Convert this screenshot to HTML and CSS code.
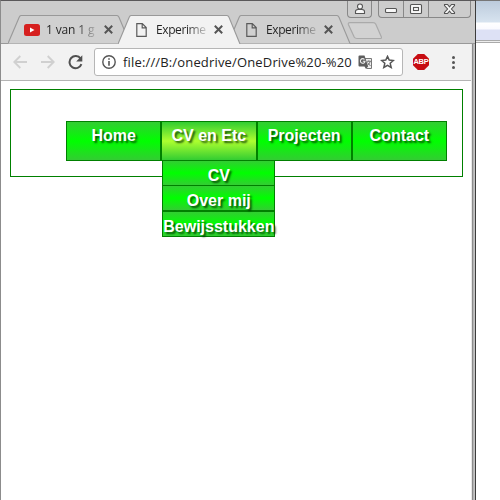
FILE: index.html
```html
<!DOCTYPE html>
<html lang="nl">
<head>
<meta charset="utf-8">
<title>Experiment</title>
<link rel="stylesheet" href="styles.css">
</head>
<body>
<div class="desktop">
  <div class="window">
    <header class="titlebar">
      <div class="controls">
        <span class="ctl user"><svg width="12" height="12" viewBox="0 0 12 12"><circle cx="6" cy="3.5" r="2.5"/><path d="M1.5 10.5V8.5Q1.5 6.7 4 6.5H8Q10.5 6.7 10.5 8.5V10.5Z"/></svg></span>
        <div class="ctl-group">
          <span class="ctl min"><svg width="14" height="12" viewBox="0 0 14 12"><rect x="1.5" y="5.5" width="11" height="4" rx="1"/></svg></span>
          <span class="ctl max"><svg width="14" height="12" viewBox="0 0 14 12"><rect x="1.5" y="1.5" width="11" height="9" rx="1"/><rect x="4.5" y="4.5" width="5" height="3"/></svg></span>
          <span class="ctl close"><svg width="13" height="12" viewBox="0 0 13 12"><path d="M1.5 1.5H4.5L6.5 3.8 8.5 1.5H11.5V2.5L8.4 6 11.5 9.5V10.5H8.5L6.5 8.2 4.5 10.5H1.5V9.5L4.6 6 1.5 2.5Z"/></svg></span>
        </div>
      </div>
      <div class="tabs">
        <div class="tab first">
          <svg class="shape" width="124" height="29" viewBox="0 0 124 29"><path d="M0 28.5L11.2 2.2Q12 .5 13.5 .5H108.5Q110 .5 111 2.2L122 28.5"/></svg>
          <svg class="youtube" width="16" height="12" viewBox="0 0 16 12"><rect width="16" height="12" rx="2.5" fill="#d6201f"/><path d="M6 3.5V8.5L10.5 6Z" fill="#fff"/></svg>
          <span class="label">1 van 1 g</span>
          <svg class="x" width="9" height="9" viewBox="0 0 9 9"><path d="M.8 .8L8.2 8.2M8.2 .8L.8 8.2"/></svg>
        </div>
        <div class="tab third">
          <svg class="shape" width="124" height="29" viewBox="0 0 124 29"><path d="M0 28.5L11.2 2.2Q12 .5 13.5 .5H108.5Q110 .5 111 2.2L122 28.5"/></svg>
          <svg class="page" width="11" height="14" viewBox="0 0 11 14"><path d="M.8 .7H6.3L10.2 4.6V13.3H.8ZM6.2 .7V4.8H10.2"/></svg>
          <span class="label">Experime</span>
          <svg class="x" width="9" height="9" viewBox="0 0 9 9"><path d="M.8 .8L8.2 8.2M8.2 .8L.8 8.2"/></svg>
        </div>
        <div class="tab active">
          <svg class="shape" width="124" height="29" viewBox="0 0 124 29"><path d="M0 29L11.2 2.2Q12 .5 13.5 .5H108.5Q110 .5 111 2.2L122 29"/></svg>
          <svg class="page" width="11" height="14" viewBox="0 0 11 14"><path d="M.8 .7H6.3L10.2 4.6V13.3H.8ZM6.2 .7V4.8H10.2"/></svg>
          <span class="label">Experime</span>
          <svg class="x" width="9" height="9" viewBox="0 0 9 9"><path d="M.8 .8L8.2 8.2M8.2 .8L.8 8.2"/></svg>
        </div>
        <svg class="newtab" width="36" height="18" viewBox="0 0 36 18"><path d="M3 .7H26Q28 .7 28.8 2.3L34.3 14.8Q35 16.5 33 16.5H10Q8 16.5 7.2 15L1.4 2.5Q.8 .7 3 .7Z"/></svg>
      </div>
    </header>
    <div class="toolbar">
      <svg class="arrow back" width="14" height="14" viewBox="0 0 14 14"><path d="M14 7H1.5M7.3 1L1.3 7 7.3 13"/></svg>
      <svg class="arrow fwd" width="14" height="14" viewBox="0 0 14 14"><path d="M0 7H12.5M6.7 1L12.7 7 6.7 13"/></svg>
      <svg class="reload" width="15" height="15" viewBox="0 0 15 15"><path d="M12.6 3.6A6.1 6.1 0 1 0 13.4 9.2" fill="none" stroke="#505050" stroke-width="2"/><path d="M14.3 .3V6.4H8.2Z" fill="#505050"/></svg>
      <div class="address">
        <svg class="info" width="14" height="14" viewBox="0 0 14 14"><circle cx="7" cy="7" r="6.2" fill="none" stroke="#555" stroke-width="1.4"/><path d="M6.2 6H7.8V10.7H6.2ZM6.2 3.2H7.8V4.8H6.2Z" fill="#555"/></svg>
        <span class="url">file:///B:/onedrive/OneDrive%20-%20</span>
        <svg class="translate" width="15" height="15" viewBox="0 0 15 15"><path d="M6 3.5H13.5V13.5H8.5" fill="#eee" stroke="#777"/><path d="M1.5 .5H6.5L10.2 11.5H1.5Q.5 11.5 .5 10.5V1.5Q.5 .5 1.5 .5ZM6.5 11.5H10L8 14Z" fill="#5d5d5d"/><path d="M6.5 4.5A2.3 2.3 0 1 0 7 6.2H4.8" fill="none" stroke="#eee" stroke-width="1.1"/><path d="M8.7 6.3H13M10.8 5.3V6.3M12.2 6.3Q11.8 8.5 9.7 10.2M9.5 7.5L12.5 11" fill="none" stroke="#777"/></svg>
        <svg class="star" width="15" height="14" viewBox="0 0 15 14"><path d="M7.5 1.4L9.2 5.1 13.4 5.5 10.2 8.3 11.2 12.5 7.5 10.3 3.8 12.5 4.8 8.3 1.6 5.5 5.8 5.1Z"/></svg>
      </div>
      <span class="abp">ABP</span>
      <svg class="dots" width="3" height="13" viewBox="0 0 3 13"><g fill="#555"><circle cx="1.5" cy="1.6" r="1.5"/><circle cx="1.5" cy="6.5" r="1.5"/><circle cx="1.5" cy="11.4" r="1.5"/></g></svg>
    </div>
    <main class="content">
      <nav class="nav">
        <ul class="menu">
          <li>Home</li>
          <li class="open">CV en Etc
            <ul class="submenu">
              <li>CV</li>
              <li>Over mij</li>
              <li>Bewijsstukken</li>
            </ul>
          </li>
          <li>Projecten</li>
          <li>Contact</li>
        </ul>
      </nav>
    </main>
  </div>
  <aside class="behind"><div class="behind-bar"></div></aside>
</div>
</body>
</html>
```
FILE: styles.css
```css
* { box-sizing: border-box; }
body { margin: 0; overflow: hidden; background: #fff; }
svg { display: block; flex: none; }
ul { list-style: none; margin: 0; padding: 0; }
.desktop { display: flex; width: 500px; height: 500px; }
.window {
  position: relative;
  width: 476px;
  height: 500px;
  border-left: 1px solid #8c8c8c;
  border-right: 1px solid #3c3c3c;
  border-top: 1px solid #5a585a;
  background: #fff;
}
.window::after {
  content: "";
  position: absolute;
  top: 43px;
  right: 0;
  bottom: 0;
  width: 4px;
  background: linear-gradient(90deg, #e8e8e8 1px, #8c8c8c 1px 2px, #b4b4b4 2px 3px, #c4c4c4 3px);
}
.titlebar {
  height: 43px;
  background: #ccc;
  border-bottom: 1px solid #999;
  font: 12px "Open Sans", "Noto Sans", sans-serif;
}
.controls {
  display: flex;
  justify-content: flex-end;
  gap: 6px;
  height: 14px;
  padding-right: 4px;
}
.ctl { display: flex; justify-content: center; align-items: center; height: 16px; }
.controls svg { fill: #f8f8f8; stroke: #555; stroke-width: 1.1; }
.user { width: 25px; height: 17px; border: 1px solid #888; border-top: 0; border-radius: 0 0 4px 4px; }
.ctl-group { display: flex; height: 17px; width: 93px; border: 1px solid #888; border-top: 0; border-radius: 0 0 4px 4px; }
.min { width: 25px; border-right: 1px solid #888; }
.max { width: 25px; border-right: 1px solid #888; }
.close { flex: 1; }
.tabs { display: grid; grid-template-columns: 110px 110px 119px 40px; padding-left: 7px; height: 29px; }
.tab {
  position: relative;
  display: flex;
  align-items: center;
  width: 124px;
  height: 29px;
  padding-left: 18px;
  grid-row: 1;
}
.tab > * { position: relative; }
.tab > .shape { position: absolute; left: 0; top: 0; fill: #d0d0d0; stroke: #999; stroke-width: 1.1; }
.first { grid-column: 1; padding-left: 16px; }
.third { grid-column: 3; }
.active { grid-column: 2; z-index: 2; }
.active > .shape { fill: #f2f2f2; }
.youtube { margin-right: 6px; }
.page { margin-right: 9px; fill: none; stroke: #5a5a5a; stroke-width: 1.2; }
.label {
  width: 51px;
  margin-right: 7px;
  white-space: nowrap;
  letter-spacing: -0.4px;
  line-height: 18px;
  color: transparent;
  background: linear-gradient(90deg, #222 60%, rgba(34,34,34,.25) 95%);
  -webkit-background-clip: text;
  background-clip: text;
}
.first .label { width: 50px; margin-right: 8px; letter-spacing: -0.15px; }
.x { stroke: #555; stroke-width: 2; }
.newtab { grid-column: 4; grid-row: 1; margin: 7px 0 0 0; fill: #d2d2d2; stroke: #aaa; stroke-width: 1.2; }
.toolbar {
  display: flex;
  align-items: center;
  height: 37px;
  padding-left: 12px;
  background: #f2f2f2;
  border-bottom: 1px solid #b4b4b4;
}
.arrow { fill: none; stroke: #d0d0d0; stroke-width: 1.9; }
.fwd { margin-left: 14px; }
.reload { margin-left: 13px; }
.address {
  display: flex;
  align-items: center;
  width: 309px;
  height: 28px;
  margin-left: 11px;
  padding-left: 7px;
  border: 1px solid #b6b6b6;
  border-radius: 3px;
  background: #fff;
}
.url {
  width: 230px;
  margin-left: 7px;
  white-space: nowrap;
  font: 13px/20px "Open Sans", "Noto Sans", sans-serif;
  letter-spacing: .16px;
  color: #222;
}
.translate { margin-left: 5px; }
.star { margin-left: 7px; fill: none; stroke: #555; stroke-width: 1.5; }
.abp {
  width: 16px;
  height: 16px;
  margin-left: 10px;
  clip-path: polygon(30% 0, 70% 0, 100% 30%, 100% 70%, 70% 100%, 30% 100%, 0 70%, 0 30%);
  background: #c70d12;
  color: #fff;
  text-align: center;
  font: bold 7.5px/16px "Liberation Sans", sans-serif;
  letter-spacing: -.2px;
}
.dots { margin-left: 23px; }
.content { padding: 8px 12px 0 9px; }
.nav { width: 453px; height: 88px; border: 1px solid green; padding: 31px 0 0 55px; }
.menu {
  display: flex;
  font: bold 16px/28px "Liberation Sans", Arial, sans-serif;
  text-align: center;
  color: #fff;
  text-shadow: 2px 2px 2px rgba(0, 50, 0, .8);
}
.menu > li { position: relative; width: 95.25px; height: 40px; }
.menu li { border: 1px solid green; background: linear-gradient(limegreen, lime 50%, limegreen); }
.menu > .open { background: linear-gradient(limegreen, greenyellow 50%, limegreen); }
.submenu { position: absolute; left: 0; top: 38px; width: 113px; }
.submenu li { height: 26px; margin-bottom: -.7px; line-height: 30px; white-space: nowrap; }
.behind { flex: 1; background: #fff; }
.behind-bar {
  height: 43px;
  border-top: 1px solid #777;
  border-bottom: 1px solid #aaa;
  background: linear-gradient(#bccbdc, #d7e3ef 21px, #fff 22px, #fafaff 28px, #dde1f5 29px, #dde1f5 39px, #aaa 39px 40px, #eee 40px);
}
```
